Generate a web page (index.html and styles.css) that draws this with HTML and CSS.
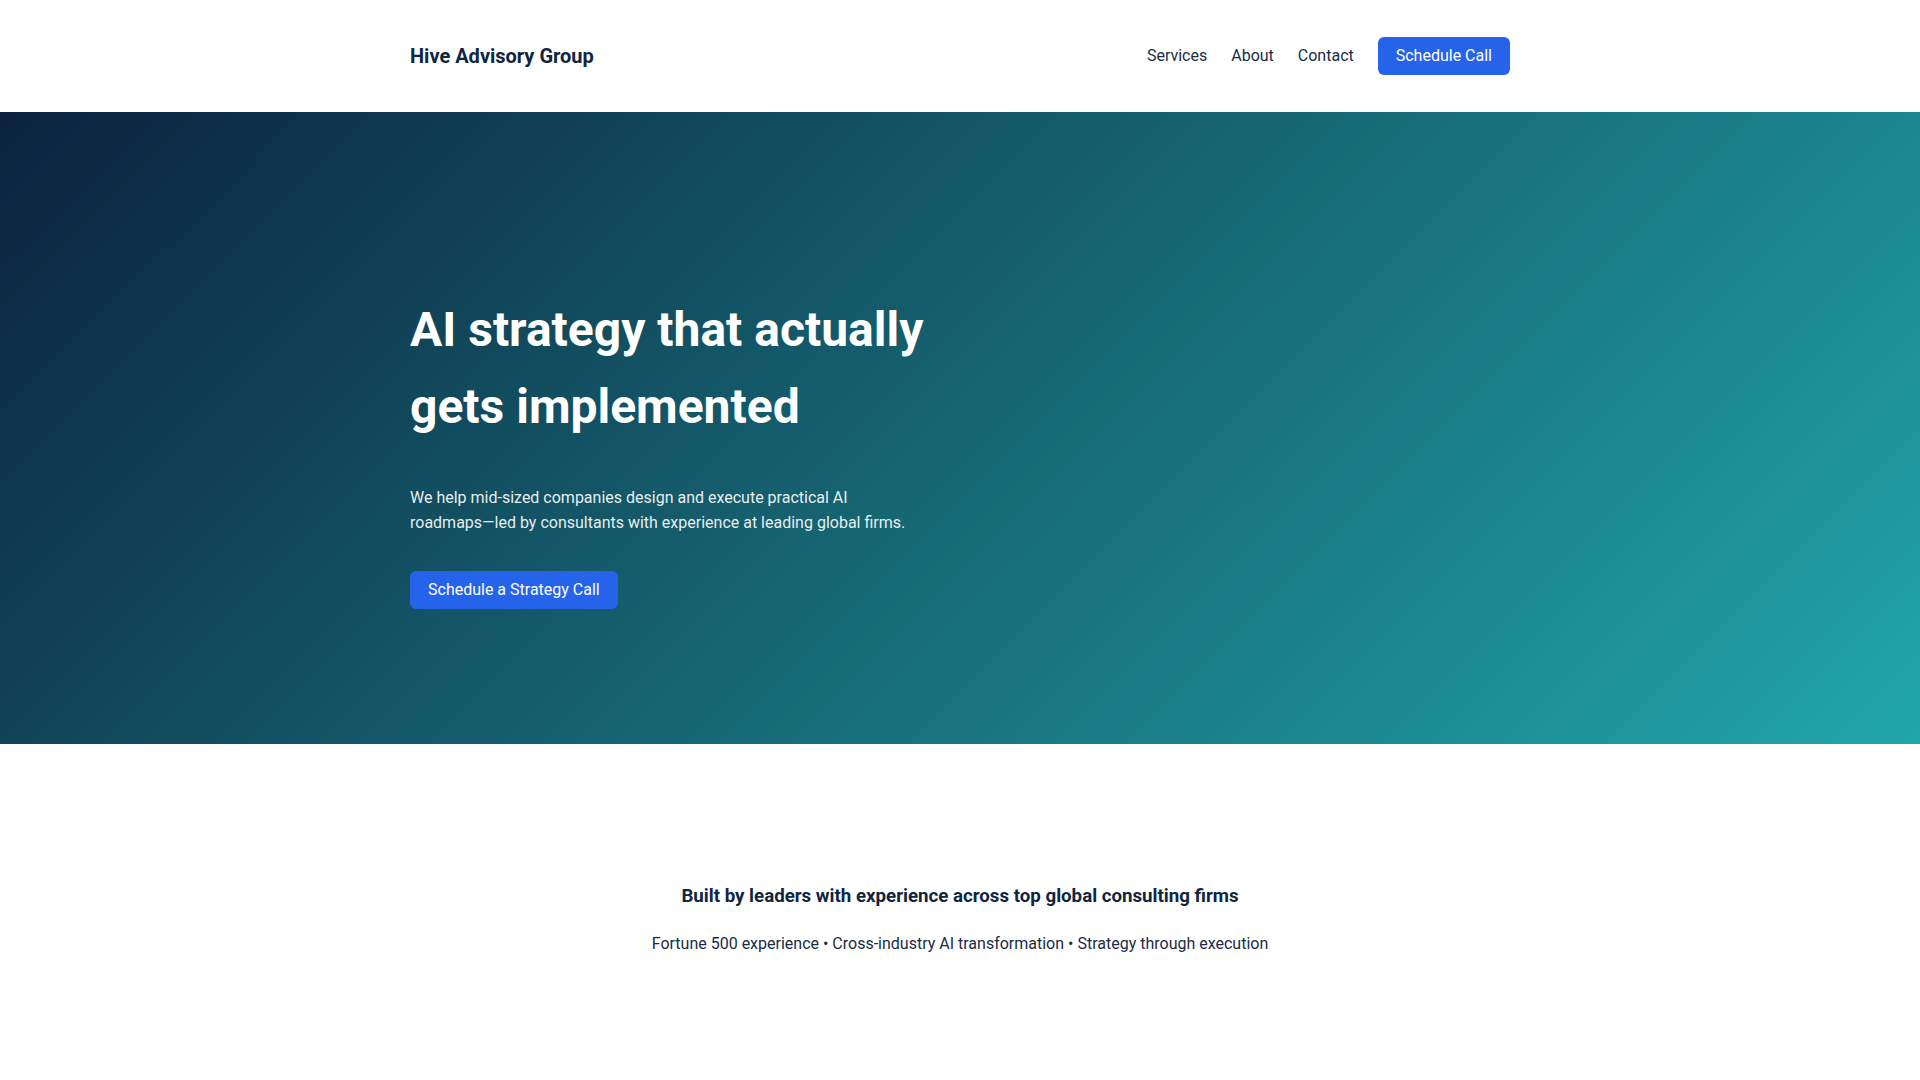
FILE: index.html
```html
<!DOCTYPE html>
<html lang="en">
<head>
<meta charset="utf-8">
<title>Hive Advisory Group</title>
<link rel="stylesheet" href="styles.css">
</head>
<body>
<header class="site-header">
  <div class="container header-inner">
    <div class="logo">Hive Advisory Group</div>
    <nav class="nav">
      <a href="#" class="nav-link">Services</a>
      <a href="#" class="nav-link">About</a>
      <a href="#" class="nav-link">Contact</a>
      <a href="#" class="btn">Schedule Call</a>
    </nav>
  </div>
</header>
<section class="hero">
  <div class="container">
    <div class="hero-content">
      <h1 class="hero-title">AI strategy that actually gets implemented</h1>
      <p class="hero-text">We help mid-sized companies design and execute practical AI <span class="nowrap">roadmaps—led</span> by consultants with experience at leading global firms.</p>
      <a href="#" class="btn">Schedule a Strategy Call</a>
    </div>
  </div>
</section>
<section class="credibility">
  <div class="container">
    <h2 class="cred-title">Built by leaders with experience across top global consulting firms</h2>
    <p class="cred-text">Fortune 500 experience • Cross-industry AI transformation • Strategy through execution</p>
  </div>
</section>
</body>
</html>
```
FILE: styles.css
```css
* {
  box-sizing: border-box;
}

html, body {
  margin: 0;
  padding: 0;
}

body {
  font-family: Roboto, "Liberation Sans", Arial, sans-serif;
  font-size: 16px;
  line-height: 1.6;
  color: #0f2540;
  background: #ffffff;
}

a {
  text-decoration: none;
}

.nowrap {
  white-space: nowrap;
}

.container {
  max-width: 1100px;
  margin: 0 auto;
}

.site-header {
  background: #ffffff;
}

.header-inner {
  display: flex;
  align-items: center;
  justify-content: space-between;
  height: 112px;
  padding-bottom: 1px;
}

.logo {
  font-size: 20px;
  font-weight: 700;
  color: #0f2540;
}

.nav {
  display: flex;
  align-items: center;
  gap: 24px;
}

.nav-link {
  color: #1a2c44;
  font-size: 16px;
}

.btn {
  display: inline-block;
  background: #2563eb;
  color: #ffffff;
  font-size: 16px;
  line-height: 22px;
  padding: 8px 18px;
  border-radius: 6px;
}

.hero {
  background: linear-gradient(135deg, #0b223f 0%, #176c78 55%, #21a6aa 100%);
  padding: 180px 0 135px;
  color: #ffffff;
}

.hero-content {
  max-width: 530px;
}

.hero-title {
  font-size: 48px;
  font-weight: 700;
  line-height: 1.6;
  margin: 0 0 39px;
  color: #ffffff;
}

.hero-text {
  font-size: 16px;
  line-height: 1.6;
  margin: 0 0 35px;
  color: rgba(255, 255, 255, 0.92);
}

.credibility {
  padding: 138px 0 120px;
  text-align: center;
}

.cred-title {
  font-size: 18.7px;
  font-weight: 700;
  line-height: 1.6;
  margin: 0 0 19px;
  color: #0f2540;
}

.cred-text {
  margin: 0;
  color: #1a2c44;
}
```
